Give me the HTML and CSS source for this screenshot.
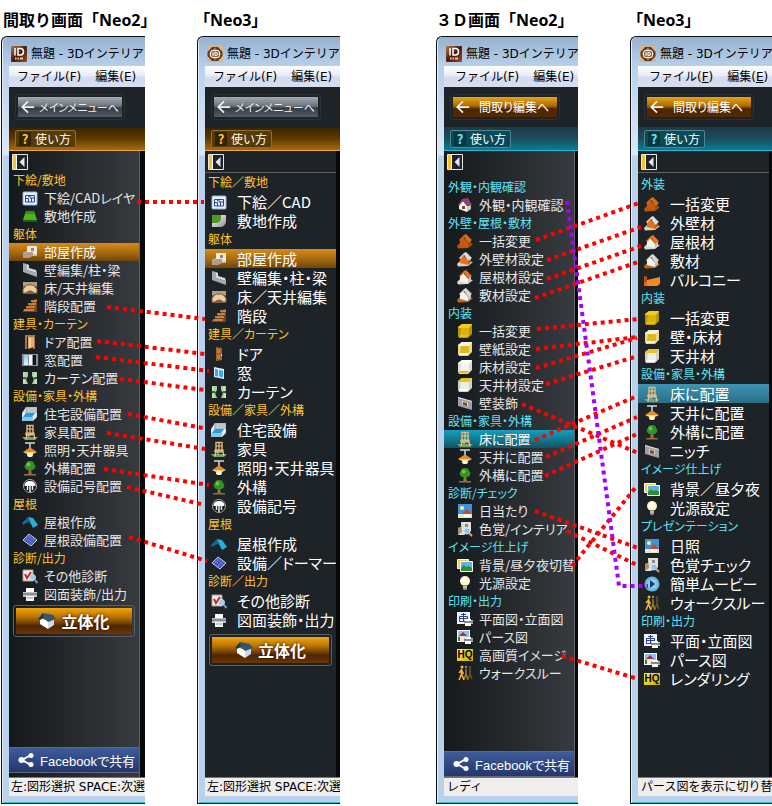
FILE: index.html
```html
<!DOCTYPE html>
<html lang="ja">
<head>
    <meta charset="UTF-8">
    <meta name="viewport" content="width=device-width, initial-scale=1.0">
    <title>Neo2 / Neo3 メニュー比較</title>
    <link rel="stylesheet" href="styles.css">
</head>
<body>

<!-- アイコン -->
<svg class="sprite" aria-hidden="true">
    <defs>
        <linearGradient id="g-gray" x1="0" y1="0" x2="1" y2="1"><stop offset="0" stop-color="#fff"/><stop offset="1" stop-color="#8d8f92"/></linearGradient>
        <linearGradient id="g-win" x1="0" y1="0" x2="0" y2="1"><stop offset="0" stop-color="#8cc8f4"/><stop offset="1" stop-color="#dff2ff"/></linearGradient>
        <linearGradient id="g-logo" x1="0" y1="0" x2="1" y2="1"><stop offset="0" stop-color="#b07a52"/><stop offset=".5" stop-color="#4a1c0c"/><stop offset="1" stop-color="#a04a20"/></linearGradient>
    </defs>
    <symbol id="logo2" viewBox="0 0 16 16">
        <rect width="16" height="16" rx="1" fill="url(#g-logo)"/>
        <path d="M4 2v7.500M7 2.500h2.500q3 0 3 3.200t-3 3.300H7z" fill="none" stroke="#fff" stroke-width="1.500"/>
        <path d="M4 12.500h1.500m1 0H8m1 0h3" stroke="#f2c9a4" stroke-width="2"/>
    </symbol>
    <symbol id="logo3" viewBox="0 0 16 16">
        <rect width="16" height="16" fill="#d3b593"/>
        <path d="M5 1h6l4.500 5v4L11 15H5L.5 10V6z" fill="#5e3a20"/>
        <path d="M8 1.500L14.500 8 8 14.500 1.500 8z" fill="#a57a54"/>
        <rect x="3.500" y="4.500" width="9" height="7" rx="2" fill="#9a6b45" stroke="#fff"/>
        <path d="M6 6v4M8 6.500h1.200q1.300 0 1.300 1.500T9.200 9.500H8z" fill="none" stroke="#fff"/>
    </symbol>
    <symbol id="i-cad" viewBox="0 0 16 16">
        <rect x="1" y="2" width="14" height="13" rx="1" fill="#e9f0fb" stroke="#9db4dc"/>
        <path d="M3.500 5.500h9v6.500h-9zM3.500 8.500h3v3.500M8 5.500v2.500h4.500M9.500 8v4M6.500 5.500v1.500" fill="none" stroke="#28489a"/>
    </symbol>
    <symbol id="i-lot" viewBox="0 0 16 16"><path d="M4 3h8l3 9H1z" fill="#4cb51e"/><path d="M1 12h14v2H1z" fill="#17600d"/><path d="M4 3h8l1 3H3z" fill="#318f12"/></symbol>
    <symbol id="i-lot3" viewBox="0 0 16 16"><path d="M1 2h14v7q-1 5-6 5H1z" fill="url(#g-gray)"/><path d="M1 2h9v4q-1 4-5 4H1z" fill="#4f9a25"/></symbol>
    <symbol id="i-room" viewBox="0 0 16 16"><path d="M5 2v5L1 9v5l5-2h9V9l-5-1V2z" fill="#cdbfae"/><path d="M5 2h10v8H5z" fill="#efe8dc"/><path d="M9 4h3v3H9z" fill="#8c8781"/><path d="M1 10l4-2h6v4l-4 2H1z" fill="#b29c86"/></symbol>
    <symbol id="i-wall" viewBox="0 0 16 16"><path d="M1 1l4 1v6l10 3v4L1 10z" fill="#a4aab0"/><path d="M5 2v6l10 3-1-3-7-2V3z" fill="#d5d9dd"/></symbol>
    <symbol id="i-floor" viewBox="0 0 16 16"><path d="M1 2h14v12H1z" fill="#7b6049"/><path d="M1 2h14v4H1z" fill="#ae9c88"/><path d="M1 13V9l4-4h6l4 4v4h-3q-4-4-8 0z" fill="#e8cda5" stroke="#8b552c"/></symbol>
    <symbol id="i-stairs" viewBox="0 0 16 16"><path d="M12 1h3v13H1v-2h3V9h3V6h3V3h2z" fill="#7b431b"/><path d="M9 3h6M6 6h8M4 9h9M2 12h10" stroke="#d99a57" stroke-width="1.500"/></symbol>
    <symbol id="i-door" viewBox="0 0 16 16"><path d="M3 1h10v14H3z" fill="#a8764c"/><path d="M5 3h6v12H5z" fill="#2e2018"/><path d="M6 3h6v10l-6 2z" fill="#e0ad74"/><path d="M8 4v9" stroke="#fff0cd"/></symbol>
    <symbol id="i-door3" viewBox="0 0 16 16"><path d="M5 1l6 1v12l-6 1z" fill="#a2612a"/><path d="M6 3l3 .5v3.500H6zM6 9h3v4H6z" fill="#bc7b3e"/><path d="M10 8h1v2h-1z" fill="#ffd887"/></symbol>
    <symbol id="i-window" viewBox="0 0 16 16"><path d="M0 2h16v12H0z" fill="#8b9298"/><path d="M2 3h4v10H2z" fill="url(#g-win)"/><path d="M7 3h3v10H7z" fill="#f1f7ff"/><path d="M11 3h3v10h-3z" fill="#10151d"/></symbol>
    <symbol id="i-window3" viewBox="0 0 16 16"><path d="M3 2l10 2v10L3 12z" fill="#dcefff"/><path d="M4 4l3 .5v7L4 11zM8 5l4 .8v6.700L8 11.500z" fill="#3da6e8"/></symbol>
    <symbol id="i-curtain" viewBox="0 0 16 16"><path d="M1 2h5v4L4 9l2 5H1zM15 2h-5v4l2 3-2 5h5z" fill="#a8cf9f"/><path d="M2 3v5m11-5v5M2 10v4m12-4v4" stroke="#e4f4da"/><path d="M1 8h3M12 8h3" stroke="#2b6a38" stroke-width="2"/></symbol>
    <symbol id="i-bath" viewBox="0 0 16 16"><path d="M4 1h11v10l-4 4H0V7z" fill="#dfe9ef"/><path d="M4 1h11v6H3z" fill="#aab4ba"/><path d="M5 3h9M5 5h9M7 1v6M10 1v6M13 1v6" stroke="#dfe6ea" stroke-width=".5"/><path d="M4 7h9l-3 4H1z" fill="#229fda"/><path d="M0 11h11v4H0z" fill="#8fc4e4"/></symbol>
    <symbol id="i-chair" viewBox="0 0 16 16"><path d="M0 13h16l-3 3H3z" fill="#77a36b"/><path d="M5 9V1.500h6V9" fill="none" stroke="#e0b26d" stroke-width="1.500"/><path d="M5 5h6M8 1v8M4 9h8v2H4zM5 11l-1 4M7 11v2M12 11l1 4" stroke="#efc98b" stroke-width="1.200" fill="#d8a55e"/></symbol>
    <symbol id="i-lamp" viewBox="0 0 16 16"><path d="M3 1h10M8 1v6" stroke="#d7d7d7" stroke-width="1.500"/><path d="M1 10l6-4h2l6 4z" fill="#e98a30"/><path d="M1 10h14l-4 2H5z" fill="#ffcd7a"/><ellipse cx="8" cy="13" rx="3" ry="2" fill="#fff8ce"/></symbol>
    <symbol id="i-tree" viewBox="0 0 16 16"><path d="M2 14h12v1.500H2z" fill="#7e775e"/><path d="M7 9h2l1 6H6z" fill="#a46b34"/><path d="M8 1q4 0 4 3 2 1 1 4-2 3-5 2-3 1-5-2-1-3 1-4 0-3 4-3z" fill="#2e9428"/><circle cx="6.500" cy="4.500" r="2" fill="#66c744"/></symbol>
    <symbol id="i-symbol" viewBox="0 0 16 16"><circle cx="8" cy="8" r="6.500" fill="#111" stroke="#aaa"/><path d="M2.500 8q0-5 5.500-5t5.500 5z" fill="#fff"/><path d="M5.500 7v5M8 7v7M10.500 7v5" stroke="#eee" stroke-width="1.500"/></symbol>
    <symbol id="i-roof" viewBox="0 0 16 16"><path d="M6 3l5 1 5 7-5 3-3-6z" fill="#27afd5"/><path d="M6 3L0 9l1 2 5-3 2 1z" fill="#116c94"/></symbol>
    <symbol id="i-solar" viewBox="0 0 16 16"><path d="M7 2l8 6-6 6L1 8z" fill="#4356c0" stroke="#c3cef5"/><path d="M4 6l7 6M6 4l7 6M3 9l6-6M6 12l6-6" stroke="#7e8fe4" stroke-width=".6"/></symbol>
    <symbol id="i-check" viewBox="0 0 16 16"><path d="M1 2h10v11H1z" fill="#f4efed" stroke="#a79b95"/><path d="M3 6l2 4 4-6" fill="none" stroke="#c42424" stroke-width="2"/><circle cx="10.500" cy="9.500" r="3" fill="#9cd0ee" stroke="#cfd9df"/><path d="M13 12l2.500 3" stroke="#6aa0c8" stroke-width="2"/></symbol>
    <symbol id="i-print" viewBox="0 0 16 16"><path d="M4 2h8v4H4z" fill="#fff"/><path d="M1 6h14v5H1z" fill="#bfc3c6"/><path d="M1 8h14" stroke="#55595d"/><path d="M4 10h8v5H4z" fill="#f5f5f5"/><path d="M5 12h6" stroke="#999"/></symbol>
    <symbol id="i-home" viewBox="0 0 16 16"><path d="M2 8l4-4 4 5v6l-8-3z" fill="#f8f5f2"/><path d="M10 9l4-1v4l-4 3z" fill="#cfcac5"/><path d="M5 2l6-1 4 7-5 1-4-5-4 5-1-1z" fill="#913e73"/><path d="M5 9h3v3H5z" fill="#6d5230"/></symbol>
    <!-- 色は --roof / --body / --base で切り替え -->
    <symbol id="i-house" viewBox="0 0 16 16"><path d="M0 13l4-4 12 2-5 4-10 .5z" fill="var(--base)"/><path d="M3 7l3-3 5 5v5l-8-2z" fill="var(--body)"/><path d="M11 9l3-2v4l-3 3z" fill="var(--body)"/><path d="M11 9l3-2v4l-3 3z" fill="#000" opacity=".2"/><path d="M2 7l5-5 2-1 6 6-4 3-4-6-4 4z" fill="var(--roof)"/><path d="M7 4l4 6" stroke="#000" stroke-width=".6" opacity=".3"/></symbol>
    <symbol id="i-box" viewBox="0 0 16 16"><path d="M1 4l4-3h10v10l-4 4H2L1 13z" fill="var(--side)"/><path d="M1 4l4-3h10l-3 4H2z" fill="var(--top)"/><path d="M4 5h8v7H3z" fill="var(--front)"/><path d="M3 12h9l-2 2H2z" fill="var(--bottom)"/></symbol>
    <symbol id="i-balcony" viewBox="0 0 16 16"><path d="M0 4l3 1v4h13v-4 7l-3 2H0z" fill="#e06a16"/><path d="M3 8l13-3v6l-3 3H3z" fill="#f28a2c"/><path d="M0 4l3 3v3H0z" fill="#b94c0c"/></symbol>
    <symbol id="i-niche" viewBox="0 0 16 16"><path d="M1 2l14 4v9L1 11z" fill="#9da2aa"/><path d="M1 2l14 4v1L1 3z" fill="#dde1e6"/><path d="M5 6l6 1.500v4L5 10z" fill="#f2d2a4"/><path d="M6 7l4 1v3l-4-1z" fill="#704a2e"/></symbol>
    <symbol id="i-sun" viewBox="0 0 16 16"><path d="M1 1h14v14H1z" fill="#3e94db"/><path d="M1 11h14v4H1z" fill="#e6e3cf"/><circle cx="5" cy="5" r="2" fill="#fff07c"/><path d="M7 11h6v3H7z" fill="#fff"/><path d="M5 11l5-5 5 5z" fill="#ce4632"/></symbol>
    <symbol id="i-color" viewBox="0 0 16 16"><path d="M4 1h10v9l-7 4H1V7l3-1z" fill="#e6dfd6"/><path d="M4 1v5L1 7v7l4-3z" fill="#a58f7d"/><path d="M8 3h3v3H8z" fill="#8f8a85"/><circle cx="10" cy="10" r="3" fill="#8ec2e8" stroke="#d5e2ea"/><path d="M12 12l3 3" stroke="#d7a36e" stroke-width="2"/></symbol>
    <symbol id="i-bg" viewBox="0 0 16 16"><path d="M.5 2.500h11v9H.5z" fill="#f1cf50" stroke="#fff"/><path d="M3.500 4.500h12v10h-12z" fill="#5bb5e8" stroke="#fff"/><path d="M4 11l3-3 2 2 3-1 3 2v3H4z" fill="#348c32"/></symbol>
    <symbol id="i-bulb" viewBox="0 0 16 16"><circle cx="8" cy="6" r="5" fill="#fff5bd"/><circle cx="7" cy="5" r="2.500" fill="#fff"/><path d="M6 10h4v4l-1 1H7l-1-1z" fill="#8f9295"/><path d="M6 12h4" stroke="#e2e2e2"/></symbol>
    <symbol id="i-play" viewBox="0 0 16 16"><circle cx="8" cy="8" r="7.500" fill="#66b7e4"/><circle cx="8" cy="8" r="5" fill="#8ccdf0"/><path d="M6 4l5 4-5 4z" fill="#173b62"/></symbol>
    <symbol id="i-walk" viewBox="0 0 16 16"><g fill="none" stroke-width="1.500"><path d="M13 4v5l2 5M13 9l-2 5" stroke="#6d5427"/><path d="M9 4v5l2 6M9 9l-2 5" stroke="#a77b28"/><path d="M4.500 4v5L7 15M4.500 9L2 15M4.500 5L2 8m2.500-3l2 4" stroke="#f3b637"/></g><circle cx="5" cy="2" r="1.500" fill="#f3b637"/><circle cx="9" cy="2" r="1.300" fill="#a77b28"/><circle cx="13" cy="2.500" r="1.200" fill="#6d5427"/></symbol>
    <symbol id="i-plan" viewBox="0 0 16 16"><path d="M0 1h13v12H0z" fill="#f0f3f8"/><path d="M2.500 5.500h8v5h-8zM6.500 2v9M2.500 7.500h8M4 3.500h5" fill="none" stroke="#29408e"/><path d="M7 9h9v4H7z" fill="#b9bdc1"/><path d="M8 8h6v2H8zM8 12h6v3H8z" fill="#fff"/><path d="M7 11h9" stroke="#555"/></symbol>
    <symbol id="i-pers" viewBox="0 0 16 16"><path d="M0 1h13v12H0z" fill="#fff"/><path d="M1 2h11v10H1z" fill="#8cc3ec"/><path d="M3 7h6v5H3z" fill="#f4e7d2"/><path d="M2 7l4-4 4 4z" fill="#a62b4c"/><path d="M1 8h2v4H1z" fill="#2f8a2c"/><path d="M7 9h9v4H7z" fill="#b9bdc1"/><path d="M8 8h6v2H8zM8 12h6v3H8z" fill="#fff"/><path d="M7 11h9" stroke="#555"/></symbol>
    <symbol id="i-build" viewBox="0 0 18 18"><path d="M2 6l8 3v8l-8-5z" fill="#fff"/><path d="M10 9l6-2v6l-6 4z" fill="#c9dbe9"/><path d="M0 7l5-6 2 4-5 3z" fill="#1d3a54"/><path d="M5 1l10 2 3 4-8 3-4-4z" fill="#35566f"/></symbol>
    <symbol id="i-share" viewBox="0 0 16 16"><path d="M13 3L4 8l9 5" fill="none" stroke="#fff" stroke-width="2"/><circle cx="3.500" cy="8" r="3" fill="#fff"/><circle cx="13" cy="3.500" r="2.500" fill="#fff"/><circle cx="13" cy="12.500" r="2.500" fill="#fff"/></symbol>
    <symbol id="i-arrow" viewBox="0 0 16 16"><path d="M15 8H2M8 1.500L1.500 8 8 14.500" fill="none" stroke="#f2f2f2" stroke-width="2"/></symbol>
    <symbol id="i-fold" viewBox="0 0 16 16"><path d="M.5.500h15v15H.5z" fill="#1d2327" stroke="#e8e8e8"/><path d="M1 1h3v14H1z" fill="#fbc02d"/><path d="M4.500 1v14" stroke="#fff"/><path d="M12.500 3v10L7.500 8z" fill="#e4e6f4"/></symbol>
</svg>

<main class="page">
    <div class="compare plan">
        <section class="column">
            <h2>間取り画面「Neo2」</h2>
            <div class="window neo2">
                <div class="titlebar"><svg class="icon"><use href="#logo2"/></svg>無題 - 3Dインテリア</div>
                <div class="menubar"><button>ファイル(F)</button><button>編集(E)</button></div>
                <div class="toolbar"><div class="frame"><button class="back"><svg><use href="#i-arrow"/></svg>メインメニューへ</button></div></div>
                <div class="helpbar"><button class="help"><b>?</b>使い方</button></div>
                <div class="body">
                    <nav class="sidebar">
                        <div class="fold"><button aria-label="たたむ"><svg class="icon"><use href="#i-fold"/></svg></button></div>
                        <h3>下絵/敷地</h3>
                        <button class="item"><svg class="icon"><use href="#i-cad"/></svg>下絵/CADレイヤ</button>
                        <button class="item"><svg class="icon"><use href="#i-lot"/></svg>敷地作成</button>
                        <h3>躯体</h3>
                        <button class="item active"><svg class="icon"><use href="#i-room"/></svg>部屋作成</button>
                        <button class="item"><svg class="icon"><use href="#i-wall"/></svg>壁編集/柱・梁</button>
                        <button class="item"><svg class="icon"><use href="#i-floor"/></svg>床/天井編集</button>
                        <button class="item"><svg class="icon"><use href="#i-stairs"/></svg>階段配置</button>
                        <h3>建具・カーテン</h3>
                        <button class="item"><svg class="icon"><use href="#i-door"/></svg>ドア配置</button>
                        <button class="item"><svg class="icon"><use href="#i-window"/></svg>窓配置</button>
                        <button class="item"><svg class="icon"><use href="#i-curtain"/></svg>カーテン配置</button>
                        <h3>設備・家具・外構</h3>
                        <button class="item"><svg class="icon"><use href="#i-bath"/></svg>住宅設備配置</button>
                        <button class="item"><svg class="icon"><use href="#i-chair"/></svg>家具配置</button>
                        <button class="item"><svg class="icon"><use href="#i-lamp"/></svg>照明・天井器具</button>
                        <button class="item"><svg class="icon"><use href="#i-tree"/></svg>外構配置</button>
                        <button class="item"><svg class="icon"><use href="#i-symbol"/></svg>設備記号配置</button>
                        <h3>屋根</h3>
                        <button class="item"><svg class="icon"><use href="#i-roof"/></svg>屋根作成</button>
                        <button class="item"><svg class="icon"><use href="#i-solar"/></svg>屋根設備配置</button>
                        <h3>診断/出力</h3>
                        <button class="item"><svg class="icon"><use href="#i-check"/></svg>その他診断</button>
                        <button class="item"><svg class="icon"><use href="#i-print"/></svg>図面装飾/出力</button>
                        <div class="frame build-frame"><button class="build"><svg><use href="#i-build"/></svg>立体化</button></div>
                        <button class="facebook"><svg class="icon"><use href="#i-share"/></svg>Facebookで共有</button>
                    </nav>
                </div>
                <div class="status">左:図形選択 SPACE:次選</div>
            </div>
        </section>

        <section class="column">
            <h2>「Neo3」</h2>
            <div class="window neo3">
                <div class="titlebar"><svg class="icon"><use href="#logo3"/></svg>無題 - 3Dインテリア</div>
                <div class="menubar"><button>ファイル(F)</button><button>編集(E)</button></div>
                <div class="toolbar"><div class="frame"><button class="back"><svg><use href="#i-arrow"/></svg>メインメニューへ</button></div></div>
                <div class="helpbar"><button class="help"><b>?</b>使い方</button></div>
                <div class="body">
                    <nav class="sidebar">
                        <div class="fold"><button aria-label="たたむ"><svg class="icon"><use href="#i-fold"/></svg></button></div>
                        <h3>下絵／敷地</h3>
                        <button class="item"><svg class="icon"><use href="#i-cad"/></svg>下絵／CAD</button>
                        <button class="item"><svg class="icon"><use href="#i-lot3"/></svg>敷地作成</button>
                        <h3>躯体</h3>
                        <button class="item active"><svg class="icon"><use href="#i-room"/></svg>部屋作成</button>
                        <button class="item"><svg class="icon"><use href="#i-wall"/></svg>壁編集・柱・梁</button>
                        <button class="item"><svg class="icon"><use href="#i-floor"/></svg>床／天井編集</button>
                        <button class="item"><svg class="icon"><use href="#i-stairs"/></svg>階段</button>
                        <h3>建具／カーテン</h3>
                        <button class="item"><svg class="icon"><use href="#i-door3"/></svg>ドア</button>
                        <button class="item"><svg class="icon"><use href="#i-window3"/></svg>窓</button>
                        <button class="item"><svg class="icon"><use href="#i-curtain"/></svg>カーテン</button>
                        <h3>設備／家具／外構</h3>
                        <button class="item"><svg class="icon"><use href="#i-bath"/></svg>住宅設備</button>
                        <button class="item"><svg class="icon"><use href="#i-chair"/></svg>家具</button>
                        <button class="item"><svg class="icon"><use href="#i-lamp"/></svg>照明・天井器具</button>
                        <button class="item"><svg class="icon"><use href="#i-tree"/></svg>外構</button>
                        <button class="item"><svg class="icon"><use href="#i-symbol"/></svg>設備記号</button>
                        <h3>屋根</h3>
                        <button class="item"><svg class="icon"><use href="#i-roof"/></svg>屋根作成</button>
                        <button class="item"><svg class="icon"><use href="#i-solar"/></svg>設備／ドーマー</button>
                        <h3>診断／出力</h3>
                        <button class="item"><svg class="icon"><use href="#i-check"/></svg>その他診断</button>
                        <button class="item"><svg class="icon"><use href="#i-print"/></svg>図面装飾・出力</button>
                        <div class="frame build-frame"><button class="build"><svg><use href="#i-build"/></svg>立体化</button></div>
                    </nav>
                </div>
                <div class="status">左:図形選択 SPACE:次選</div>
            </div>
        </section>
    </div>

    <div class="compare view3d">
        <section class="column">
            <h2>３Ｄ画面「Neo2」</h2>
            <div class="window neo2">
                <div class="titlebar"><svg class="icon"><use href="#logo2"/></svg>無題 - 3Dインテリア</div>
                <div class="menubar"><button>ファイル(F)</button><button>編集(E)</button></div>
                <div class="toolbar"><div class="frame"><button class="back"><svg><use href="#i-arrow"/></svg>間取り編集へ</button></div></div>
                <div class="helpbar"><button class="help"><b>?</b>使い方</button></div>
                <div class="body">
                    <nav class="sidebar">
                        <div class="fold"><button aria-label="たたむ"><svg class="icon"><use href="#i-fold"/></svg></button></div>
                        <h3>外観・内観確認</h3>
                        <button class="item"><svg class="icon"><use href="#i-home"/></svg>外観・内観確認</button>
                        <h3>外壁・屋根・敷材</h3>
                        <button class="item"><svg class="icon h-all"><use href="#i-house"/></svg>一括変更</button>
                        <button class="item"><svg class="icon h-wall"><use href="#i-house"/></svg>外壁材設定</button>
                        <button class="item"><svg class="icon h-roof"><use href="#i-house"/></svg>屋根材設定</button>
                        <button class="item"><svg class="icon h-site"><use href="#i-house"/></svg>敷材設定</button>
                        <h3>内装</h3>
                        <button class="item"><svg class="icon b-all"><use href="#i-box"/></svg>一括変更</button>
                        <button class="item"><svg class="icon b-wall"><use href="#i-box"/></svg>壁紙設定</button>
                        <button class="item"><svg class="icon b-floor"><use href="#i-box"/></svg>床材設定</button>
                        <button class="item"><svg class="icon b-ceil"><use href="#i-box"/></svg>天井材設定</button>
                        <button class="item"><svg class="icon"><use href="#i-niche"/></svg>壁装飾</button>
                        <h3>設備・家具・外構</h3>
                        <button class="item active"><svg class="icon"><use href="#i-chair"/></svg>床に配置</button>
                        <button class="item"><svg class="icon"><use href="#i-lamp"/></svg>天井に配置</button>
                        <button class="item"><svg class="icon"><use href="#i-tree"/></svg>外構に配置</button>
                        <h3>診断/チェック</h3>
                        <button class="item"><svg class="icon"><use href="#i-sun"/></svg>日当たり</button>
                        <button class="item"><svg class="icon"><use href="#i-color"/></svg>色覚/インテリア</button>
                        <h3>イメージ仕上げ</h3>
                        <button class="item"><svg class="icon"><use href="#i-bg"/></svg>背景/昼夕夜切替</button>
                        <button class="item"><svg class="icon"><use href="#i-bulb"/></svg>光源設定</button>
                        <h3>印刷・出力</h3>
                        <button class="item"><svg class="icon"><use href="#i-plan"/></svg>平面図・立面図</button>
                        <button class="item"><svg class="icon"><use href="#i-pers"/></svg>パース図</button>
                        <button class="item"><span class="icon hq">HQ</span>高画質イメージ</button>
                        <button class="item"><svg class="icon"><use href="#i-walk"/></svg>ウォークスルー</button>
                        <button class="facebook"><svg class="icon"><use href="#i-share"/></svg>Facebookで共有</button>
                    </nav>
                </div>
                <div class="status">レディ</div>
            </div>
        </section>

        <section class="column">
            <h2>「Neo3」</h2>
            <div class="window neo3">
                <div class="titlebar"><svg class="icon"><use href="#logo3"/></svg>無題 - 3Dインテリア</div>
                <div class="menubar"><button>ファイル(<u>F</u>)</button><button>編集(<u>E</u>)</button></div>
                <div class="toolbar"><div class="frame"><button class="back"><svg><use href="#i-arrow"/></svg>間取り編集へ</button></div></div>
                <div class="helpbar"><button class="help"><b>?</b>使い方</button></div>
                <div class="body">
                    <nav class="sidebar">
                        <div class="fold"><button aria-label="たたむ"><svg class="icon"><use href="#i-fold"/></svg></button></div>
                        <h3>外装</h3>
                        <button class="item"><svg class="icon h-all"><use href="#i-house"/></svg>一括変更</button>
                        <button class="item"><svg class="icon h-wall"><use href="#i-house"/></svg>外壁材</button>
                        <button class="item"><svg class="icon h-roof"><use href="#i-house"/></svg>屋根材</button>
                        <button class="item"><svg class="icon h-site"><use href="#i-house"/></svg>敷材</button>
                        <button class="item"><svg class="icon"><use href="#i-balcony"/></svg>バルコニー</button>
                        <h3>内装</h3>
                        <button class="item"><svg class="icon b-all"><use href="#i-box"/></svg>一括変更</button>
                        <button class="item"><svg class="icon b-wall"><use href="#i-box"/></svg>壁・床材</button>
                        <button class="item"><svg class="icon b-ceil"><use href="#i-box"/></svg>天井材</button>
                        <h3>設備・家具・外構</h3>
                        <button class="item active"><svg class="icon"><use href="#i-chair"/></svg>床に配置</button>
                        <button class="item"><svg class="icon"><use href="#i-lamp"/></svg>天井に配置</button>
                        <button class="item"><svg class="icon"><use href="#i-tree"/></svg>外構に配置</button>
                        <button class="item"><svg class="icon"><use href="#i-niche"/></svg>ニッチ</button>
                        <h3>イメージ仕上げ</h3>
                        <button class="item"><svg class="icon"><use href="#i-bg"/></svg>背景／昼夕夜</button>
                        <button class="item"><svg class="icon"><use href="#i-bulb"/></svg>光源設定</button>
                        <h3>プレゼンテーション</h3>
                        <button class="item"><svg class="icon"><use href="#i-sun"/></svg>日照</button>
                        <button class="item"><svg class="icon"><use href="#i-color"/></svg>色覚チェック</button>
                        <button class="item"><svg class="icon"><use href="#i-play"/></svg>簡単ムービー</button>
                        <button class="item"><svg class="icon"><use href="#i-walk"/></svg>ウォークスルー</button>
                        <h3>印刷・出力</h3>
                        <button class="item"><svg class="icon"><use href="#i-plan"/></svg>平面・立面図</button>
                        <button class="item"><svg class="icon"><use href="#i-pers"/></svg>パース図</button>
                        <button class="item"><span class="icon hq">HQ</span>レンダリング</button>
                    </nav>
                </div>
                <div class="status">パース図を表示に切り替</div>
            </div>
        </section>
    </div>

    <!-- Neo2 → Neo3 の対応線 -->
    <svg class="links" viewBox="0 0 772 806" aria-hidden="true">
        <path d="M137 202H204"/>
        <path d="M107 307L205 319"/>
        <path d="M97 341L205 354"/>
        <path d="M96 357L209 371"/>
        <path d="M120 379L205 390"/>
        <path d="M128 414L203 428"/>
        <path d="M107 433L205 449"/>
        <path d="M104 469L209 485"/>
        <path d="M127 487L205 505"/>
        <path d="M129 537L207 561"/>
        <path d="M536 240L639 203"/>
        <path d="M547 260L641 227"/>
        <path d="M547 279L641 246"/>
        <path d="M535 298L638 262"/>
        <path d="M537 329L638 319"/>
        <path d="M536 349L637 337"/>
        <path d="M536 368L637 338"/>
        <path d="M546 384L638 356"/>
        <path d="M522 404L638 453"/>
        <path d="M535 440L637 396"/>
        <path d="M546 457L637 417"/>
        <path d="M545 476L637 434"/>
        <path d="M535 511L638 548"/>
        <path d="M567 531L637 565"/>
        <path d="M572 566L636 487"/>
        <path d="M562 656L638 679"/>
        <path class="movie" d="M567 201L619 586H648"/>
    </svg>
</main>

</body>
</html>
```

FILE: styles.css
```css
* {
    box-sizing: border-box;
}
body {
    margin: 0;
    background-color: #fff;
    color: #000;
    font-family: "DejaVu Sans", "Noto Sans CJK JP", sans-serif;
    font-size: 12px;
}
button {
    margin: 0;
    padding: 0;
    border: none;
    background: none;
    color: inherit;
    font: inherit;
    white-space: nowrap;
    cursor: pointer;
}
.sprite {
    position: absolute;
    width: 0;
    height: 0;
}
.icon {
    flex: none;
    width: 16px;
    height: 16px;
}
.page {
    position: relative;
    display: grid;
    grid-template-columns: 339fr 336fr;
    gap: 96px;
    min-height: 100vh;
    padding: 0 0 2px 1px;
    overflow: hidden;
}
.compare {
    display: grid;
    grid-template-columns: 1fr 1fr;
    gap: 52px;
}
.plan {
    grid-template-columns: 144fr 143fr;
}
.column {
    display: flex;
    flex-direction: column;
    min-width: 0;
}
.column h2 {
    height: 36px;
    margin: 0;
    padding: 8px 0 0 2px;
    font-family: "Open Sans", "Noto Sans CJK JP", sans-serif;
    font-size: 16px;
    line-height: 24px;
    white-space: nowrap;
}
.column:last-child h2 {
    padding-left: 5px;
    font-feature-settings: "palt";
}
.view3d .column:first-child h2 {
    padding-left: 0;
}

/* ウィンドウ枠 */
.window {
    display: flex;
    flex: 1;
    flex-direction: column;
    padding: 0 0 7px 7px;
    overflow: hidden;
    border: 1px solid #111;
    border-right: none;
    border-top-left-radius: 6px;
    background: linear-gradient(#97b1d1, #b9d1ea 30px, #dbe8f6 118px, #b9d1ea 119px);
    box-shadow: inset 1px 0 #e4eef9, inset 0 -1px #27c4de;
}
.titlebar {
    display: flex;
    align-items: center;
    gap: 4px;
    height: 29px;
    padding: 4px 0 0 2px;
    line-height: 14px;
    white-space: nowrap;
}
.menubar {
    display: flex;
    gap: 14px;
    height: 21px;
    padding: 0 0 2px 8px;
    background: linear-gradient(#fff, #e8ecf7 45%, #d5dbef 55%, #d8def0);
}
.view3d .menubar {
    padding-left: 11px;
}
.toolbar {
    height: 40px;
    padding: 7px 0 0 6px;
    background-color: #1d2327;
    font-family: "Noto Sans CJK JP", sans-serif;
}
.frame {
    width: 110px;
    padding: 2px;
    border: 1px solid #2c3135;
    border-radius: 3px;
}
.back {
    display: flex;
    align-items: center;
    gap: 4px;
    width: 100%;
    height: 20px;
    padding-left: 3px;
    background: linear-gradient(#a3a9b0, #6d747c 45%, #343c46 55%, #525b66);
    color: #eee;
    font-size: 11px;
    line-height: 20px;
    font-feature-settings: "palt";
}
.back svg {
    flex: none;
    width: 14px;
    height: 14px;
}
.view3d .back {
    gap: 9px;
    background: linear-gradient(#eda40f, #a86a06 45%, #4c2503 60%, #542a03);
    color: #fff;
    font-size: 12px;
}
.helpbar {
    height: 24px;
    padding: 3px 0 0 6px;
    border-bottom: 1px solid #e9a548;
    background: linear-gradient(#352300, #5b3a00 50%, #a66b10);
    font-family: "Noto Sans CJK JP", sans-serif;
}
.help {
    display: flex;
    align-items: center;
    gap: 4px;
    height: 18px;
    padding: 0 4px 0 3px;
    border: 1px solid #8e6c35;
    border-radius: 2px;
    background-color: #563a08;
    color: #fff;
    line-height: 16px;
}
.help b {
    width: 12px;
    height: 14px;
    background-color: #332302;
    color: #ffc629;
    font-size: 13px;
    line-height: 14px;
}
.view3d .helpbar {
    border-color: #28b7d2;
    background: linear-gradient(#1f3a44, #1c4c5b 50%, #087d96);
}
.view3d .help {
    border-color: #4c8793;
    background-color: #0a4a58;
}
.view3d .help b {
    background-color: #083640;
    color: #6be8fa;
}

/* サイドバー */
.body {
    display: flex;
    flex: 1;
    background-color: #08090a;
}
.sidebar {
    display: flex;
    flex-direction: column;
    width: 131px;
    font-family: "Noto Sans CJK JP", sans-serif;
    font-feature-settings: "palt";
}
.neo2 .sidebar {
    border-right: 1px solid #606468;
    background: linear-gradient(to right, #14191c, #373a3e);
}
.neo3 .sidebar {
    background-color: #1d2327;
}
.fold {
    height: 20px;
    padding: 3px 0 0 3px;
}
.fold button,
.fold svg {
    display: block;
}
.neo3 .fold {
    height: 22px;
    border-bottom: 1px solid #5c6063;
}
.view3d .neo2 .fold {
    margin-bottom: 7px;
}
.view3d .neo3 .fold {
    margin-bottom: 2px;
}
.sidebar h3 {
    height: 18px;
    margin: 0;
    padding-left: 4px;
    color: #fdc32d;
    font-size: 12px;
    font-weight: normal;
    line-height: 18px;
    white-space: nowrap;
}
.view3d .sidebar h3 {
    color: #5fe3f5;
}
.item {
    display: flex;
    align-items: center;
    gap: 6px;
    height: 18px;
    padding-left: 13px;
    color: #e6e6e6;
    font-size: 13px;
    line-height: 18px;
}
.neo3 .sidebar h3 {
    height: 19px;
    padding-left: 3px;
    line-height: 18px;
}
.neo3 .item {
    gap: 10px;
    height: 19px;
    padding-left: 6px;
    color: #fff;
    font-size: 15px;
    line-height: 18px;
}
.item.active {
    background: linear-gradient(#d78b18, #a0660f 60%, #6e450b);
    color: #fff;
}
.view3d .item.active {
    background: linear-gradient(#149fc0, #12738a 60%, #15515f);
}
.view3d .neo3 .item.active {
    background: linear-gradient(#3d95b2, #2b6e87);
}
.build-frame {
    width: auto;
    margin: 2px 4px 0;
    border-color: #5c6063;
}
.neo3 .build-frame {
    margin-top: 5px;
}
.build {
    display: flex;
    align-items: center;
    justify-content: center;
    gap: 5px;
    width: 100%;
    height: 26px;
    background: linear-gradient(#f0a60c, #b87207 35%, #4f2603 70%, #6b3706);
    color: #fff;
    font-size: 16px;
    font-weight: bold;
    line-height: 24px;
    text-shadow: 0 0 3px #200;
}
.build svg {
    width: 18px;
    height: 18px;
}
.facebook {
    display: flex;
    align-items: center;
    gap: 6px;
    height: 26px;
    margin-top: auto;
    padding-left: 9px;
    border: 1px solid #62687a;
    border-width: 1px 0;
    background: linear-gradient(#3e5c9a, #24376a);
    color: #fff;
    font-family: "Liberation Sans", "Noto Sans CJK JP", sans-serif;
    font-size: 13px;
}
.plan .facebook {
    margin-bottom: 4px;
}
.status {
    height: 19px;
    padding-left: 2px;
    overflow: hidden;
    border-top: 1px solid #777;
    background-color: #f0eded;
    line-height: 18px;
    white-space: nowrap;
}
.view3d .status {
    padding-left: 3px;
}

/* アイコンの色違い */
.h-all {
    --roof: #d96a1c;
    --body: #c75a10;
    --base: #b8570f;
}
.h-wall {
    --roof: #dedcd8;
    --body: #e8701a;
    --base: #d5d3cf;
}
.h-roof {
    --roof: #e8781f;
    --body: #f4f3f0;
    --base: #dcdad6;
}
.h-site {
    --roof: #d5d6d4;
    --body: #f4f3f0;
    --base: #c9640f;
}
.b-all {
    --top: #f1cd1c;
    --side: #b99304;
    --front: #d9b30c;
    --bottom: #e8c41a;
}
.b-wall {
    --top: #f7f3dc;
    --side: #e8d98a;
    --front: #dcb923;
    --bottom: #f5f2e4;
}
.b-floor {
    --top: #fff;
    --side: #dedbd0;
    --front: #f6f4ec;
    --bottom: #e2b91a;
}
.b-ceil {
    --top: #ecc41c;
    --side: #d4d2c8;
    --front: #f0eee6;
    --bottom: #fff;
}
.hq {
    height: 12px;
    background: linear-gradient(135deg, #fff04a, #c9a800);
    color: #000;
    font-family: "Liberation Sans", sans-serif;
    font-size: 10px;
    font-weight: bold;
    line-height: 12px;
    text-align: center;
}

/* 対応線 */
.links {
    position: absolute;
    top: 0;
    left: 0;
    width: 100%;
    pointer-events: none;
}
.links path {
    fill: none;
    stroke: #f00;
    stroke-width: 4;
    stroke-dasharray: 4 4;
}
.links .movie {
    stroke: #a800ff;
}
```
